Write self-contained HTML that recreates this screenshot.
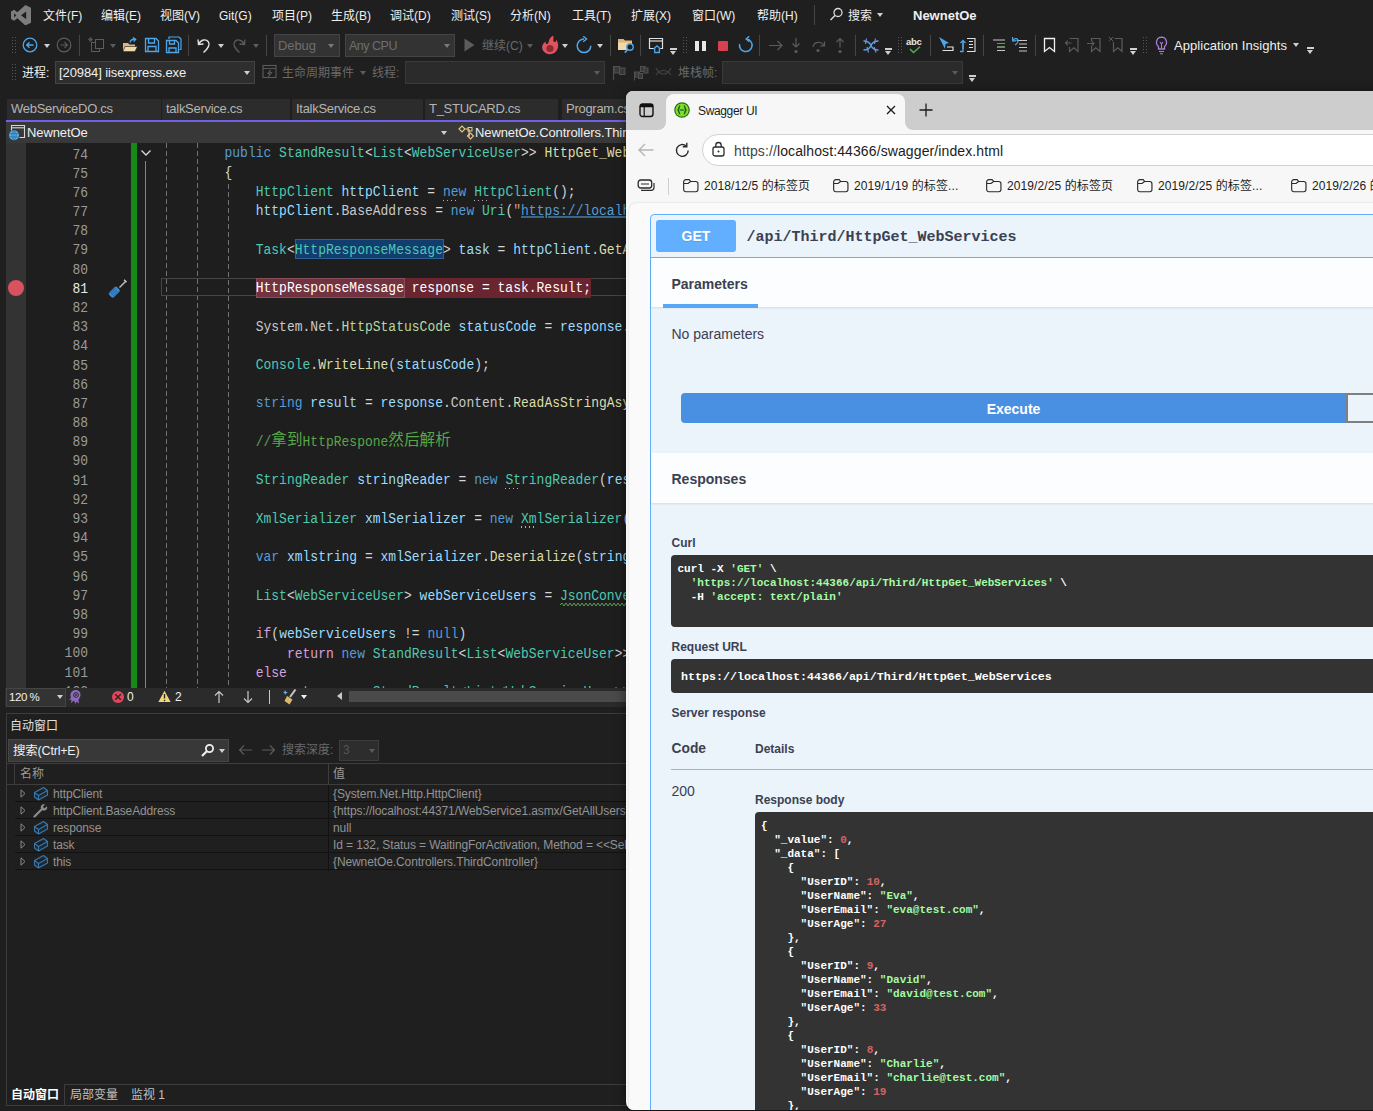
<!DOCTYPE html><html lang="zh-CN"><head><meta charset="utf-8"><title>NewnetOe</title><style>
*{box-sizing:border-box;margin:0;padding:0}
html,body{width:1373px;height:1111px;overflow:hidden;background:#1f1f1f}
body{position:relative;font-family:"Liberation Sans","Noto Sans CJK SC",sans-serif;font-size:12px;color:#e6e6e6}
.a{position:absolute;white-space:nowrap}
.ui{font-size:12px;line-height:16px;color:#f0f0f0}
.dim{color:#6a6a6a}
.combo{position:absolute;background:#333;border:1px solid #444}
.sep{position:absolute;width:1px;background:#454545}
.grip{position:absolute;width:5px;background-image:radial-gradient(circle,#5a5a5a 0.7px,transparent 0.9px);background-size:3px 3px}
.tab{position:absolute;top:99px;height:21px;background:#2c2c2c;color:#b4b4b4;font-size:13px;line-height:20px;padding-left:4px;white-space:nowrap;overflow:hidden;letter-spacing:-0.28px}
.code{font-family:"Liberation Mono","Noto Sans CJK SC",monospace;font-size:13px;line-height:19px;white-space:pre;color:#dcdcdc}
.code span{display:inline-block;transform:scaleY(1.12);transform-origin:0 55%}
.code span.cj{transform:none;color:#57a64a;position:relative;top:-1px;font-size:15.6px;font-family:"Liberation Mono","Noto Sans CJK SC",sans-serif;line-height:19px;vertical-align:top}
.ln{position:absolute;left:26px;width:56px;text-align:right;color:#9a9a9a}
.k{color:#569cd6}.t{color:#4ec9b0}.v{color:#9cdcfe}.m{color:#dcdcaa}.p{color:#d4d4d4}.s{color:#d69d85}.c{color:#57a64a}.f{color:#d8a0df}.u{color:#569cd6;text-decoration:underline}.n{color:#c8c8c8}.w{color:#fff}.e{color:#b8d7a3}
.sw{font-family:"Liberation Sans","Noto Sans CJK SC",sans-serif;color:#3b4151}
.mono{font-family:"Liberation Mono",monospace;font-weight:bold;white-space:pre}
.g{color:#a2fca2}.r{color:#d36363}
</style></head><body>
<svg class="a" style="left:10.9px;top:4.8px" width="20.2" height="20.6" viewBox="0 0 20.2 20.6"><path d="M14.4 0 L20.1 2.9 V17.6 L14.4 20.5 L6.3 13.2 L3.2 15.8 L0 14 V6.5 L3.2 4.7 L6.3 7.3 Z M15.2 6.5 L10 10.3 L15.2 14.3 Z M3.1 8.2 V12.5 L5.3 10.3 Z" fill="#7d7d7d" fill-rule="evenodd"/></svg>
<div class="a ui" style="left:43px;top:8px">文件(F)</div>
<div class="a ui" style="left:101px;top:8px">编辑(E)</div>
<div class="a ui" style="left:160px;top:8px">视图(V)</div>
<div class="a ui" style="left:219px;top:8px">Git(G)</div>
<div class="a ui" style="left:272px;top:8px">项目(P)</div>
<div class="a ui" style="left:331px;top:8px">生成(B)</div>
<div class="a ui" style="left:390px;top:8px">调试(D)</div>
<div class="a ui" style="left:451px;top:8px">测试(S)</div>
<div class="a ui" style="left:510px;top:8px">分析(N)</div>
<div class="a ui" style="left:572px;top:8px">工具(T)</div>
<div class="a ui" style="left:631px;top:8px">扩展(X)</div>
<div class="a ui" style="left:692px;top:8px">窗口(W)</div>
<div class="a ui" style="left:757px;top:8px">帮助(H)</div>
<div class="sep" style="left:814px;top:5px;height:20px"></div>
<svg class="a" style="left:829px;top:7px" width="15" height="15" viewBox="0 0 15 15"><circle cx="9" cy="5.5" r="4" fill="none" stroke="#dcdcdc" stroke-width="1.3"/><path d="M6 8.5 L1.5 13" stroke="#dcdcdc" stroke-width="1.5"/></svg>
<div class="a ui" style="left:848px;top:8px">搜索</div>
<div class="a" style="left:877px;top:13px;border:3.5px solid transparent;border-top:4px solid #d0d0d0"></div>
<div class="a ui" style="left:913px;top:8px;font-weight:bold;font-size:13px;letter-spacing:0">NewnetOe</div>
<div class="grip" style="left:11px;top:36px;height:19px"></div>
<svg class="a" style="left:22px;top:37px" width="16" height="16" viewBox="0 0 16 16"><circle cx="8" cy="8" r="6.8" fill="none" stroke="#4ea6ea" stroke-width="1.3"/><path d="M11.5 8 H5 M7.5 5.2 L4.7 8 L7.5 10.8" fill="none" stroke="#4ea6ea" stroke-width="1.3"/></svg>
<div class="a" style="left:44.3px;top:44.3px;border:3.5px solid transparent;border-top:4px solid #d0d0d0;border-bottom:0"></div>
<svg class="a" style="left:56px;top:37px" width="16" height="16" viewBox="0 0 16 16"><circle cx="8" cy="8" r="6.8" fill="none" stroke="#5c5c5c" stroke-width="1.2"/><path d="M4.5 8 H11 M8.5 5.2 L11.3 8 L8.5 10.8" fill="none" stroke="#5c5c5c" stroke-width="1.2"/></svg>
<div class="sep" style="left:79px;top:35px;height:21px"></div>
<svg class="a" style="left:88px;top:37px" width="17" height="17" viewBox="0 0 17 17"><rect x="3.5" y="5.5" width="8" height="9" fill="none" stroke="#5c5c5c"/><rect x="7.5" y="2.5" width="8" height="9" fill="#1f1f1f" stroke="#5c5c5c"/><path d="M2.5 0 V5 M0 2.5 H5 M0.8 0.8 L4.2 4.2 M4.2 0.8 L0.8 4.2" stroke="#5c5c5c" stroke-width="0.8"/></svg>
<div class="a" style="left:110.3px;top:44.3px;border:3.5px solid transparent;border-top:4px solid #5c5c5c;border-bottom:0"></div>
<svg class="a" style="left:122px;top:37px" width="17" height="17" viewBox="0 0 17 17"><path d="M1 6 H6 L7.5 7.5 H13 V14.5 H1 Z" fill="#dcb67a"/><path d="M3 9.5 H15.5 L13 14.5 H1 Z" fill="#f0d9a8" stroke="#1f1f1f" stroke-width="0.6"/><path d="M8 5.5 C8.5 3 10.5 2 13 2.3 M11 0.5 L13.6 2.3 L11.6 4.6" fill="none" stroke="#4ea6ea" stroke-width="1.4"/></svg>
<svg class="a" style="left:144px;top:37px" width="16" height="16" viewBox="0 0 16 16"><path d="M1.5 1.5 H12 L14.5 4 V14.5 H1.5 Z" fill="none" stroke="#4ea6ea" stroke-width="1.3"/><path d="M4.5 1.5 V6 H10.5 V1.5 M4 14.5 V9.5 H12 V14.5" fill="none" stroke="#4ea6ea" stroke-width="1.3"/></svg>
<svg class="a" style="left:165px;top:36px" width="17" height="18" viewBox="0 0 17 18"><path d="M4 3 V1 H14 L16 3 V13.5 H14.5" fill="none" stroke="#4ea6ea" stroke-width="1.2"/><path d="M1.5 4.5 H11 L13.5 7 V16.5 H1.5 Z" fill="none" stroke="#4ea6ea" stroke-width="1.3"/><path d="M4.5 4.5 V8 H9.5 V4.5 M4 16.5 V12 H11 V16.5" fill="none" stroke="#4ea6ea" stroke-width="1.3"/></svg>
<div class="sep" style="left:188px;top:35px;height:21px"></div>
<svg class="a" style="left:196px;top:37px" width="16" height="17" viewBox="0 0 16 17"><path d="M2 2.5 L2.5 7.5 L7.5 7 M2.7 7.2 C5 2.5 10 1.5 12.5 5 C14.5 8.5 11.5 12 7.5 15.5" fill="none" stroke="#e0e0e0" stroke-width="1.4"/></svg>
<div class="a" style="left:218.3px;top:44.3px;border:3.5px solid transparent;border-top:4px solid #d0d0d0;border-bottom:0"></div>
<svg class="a" style="left:231px;top:37px" width="16" height="17" viewBox="0 0 16 17"><path d="M14 2.5 L13.5 7.5 L8.5 7 M13.3 7.2 C11 2.5 6 1.5 3.5 5 C1.5 8.5 4.5 12 8.5 15.5" fill="none" stroke="#5c5c5c" stroke-width="1.3"/></svg>
<div class="a" style="left:253.3px;top:44.3px;border:3.5px solid transparent;border-top:4px solid #5c5c5c;border-bottom:0"></div>
<div class="sep" style="left:266px;top:35px;height:21px"></div>
<div class="combo" style="left:274px;top:34px;width:66px;height:23px"></div>
<div class="a ui" style="left:278px;top:38px;color:#6e6e6e;font-size:13px;letter-spacing:-0.1px">Debug</div>
<div class="a" style="left:328.3px;top:44.3px;border:3.5px solid transparent;border-top:4px solid #7a7a7a;border-bottom:0"></div>
<div class="combo" style="left:345px;top:34px;width:110px;height:23px"></div>
<div class="a ui" style="left:349px;top:38px;color:#6e6e6e;font-size:12.5px;letter-spacing:-0.5px">Any CPU</div>
<div class="a" style="left:444.3px;top:44.3px;border:3.5px solid transparent;border-top:4px solid #7a7a7a;border-bottom:0"></div>
<svg class="a" style="left:464px;top:38px" width="12" height="14" viewBox="0 0 12 14"><path d="M0.5 0.5 L10.5 7 L0.5 13.5 Z" fill="#5c5c5c"/></svg>
<div class="a ui" style="left:482px;top:38px;color:#6a6a6a">继续(C)</div>
<div class="a" style="left:527.3px;top:44.3px;border:3.5px solid transparent;border-top:4px solid #5c5c5c;border-bottom:0"></div>
<svg class="a" style="left:541px;top:35px" width="18" height="20" viewBox="0 0 18 20"><path d="M12 0.5 C13.5 4 11 5.5 13.5 7 C14.5 7.5 15.5 6 15 4.5 C18 8 18 14 14 17.5 C10 20.5 3.5 19.5 1.5 14.5 C0 10.5 3 8 4.5 6.5 C4.5 8.5 5.5 9.5 6.5 9 C8.5 7.5 7 3.5 12 0.5 Z" fill="#e0525d"/><circle cx="9" cy="13.5" r="3.6" fill="#8a2c34"/></svg>
<div class="a" style="left:562.3px;top:44.3px;border:3.5px solid transparent;border-top:4px solid #d0d0d0;border-bottom:0"></div>
<svg class="a" style="left:575px;top:36px" width="18" height="18" viewBox="0 0 18 18"><path d="M9 3 A6.8 6.8 0 1 0 15.8 9.8" fill="none" stroke="#4ea6ea" stroke-width="1.5"/><path d="M8.2 0.2 L11.6 3 L8.2 5.8" fill="none" stroke="#4ea6ea" stroke-width="1.4"/></svg>
<div class="a" style="left:597.3px;top:44.3px;border:3.5px solid transparent;border-top:4px solid #d0d0d0;border-bottom:0"></div>
<div class="sep" style="left:610px;top:35px;height:21px"></div>
<svg class="a" style="left:617px;top:36px" width="19" height="19" viewBox="0 0 19 19"><path d="M1 3 H6.5 L8 4.5 H15 V14 H1 Z" fill="#dcb67a"/><path d="M1 6.5 H15 V14 H1 Z" fill="#f0d9a8"/><circle cx="13" cy="11" r="3.2" fill="#1f1f1f" stroke="#4ea6ea" stroke-width="1.4"/><path d="M10.8 13.4 L7.8 16.6" stroke="#4ea6ea" stroke-width="1.6"/></svg>
<div class="sep" style="left:640px;top:35px;height:21px"></div>
<svg class="a" style="left:648px;top:37px" width="18" height="18" viewBox="0 0 18 18"><path d="M6 11.5 H1.5 V1.5 H14.5 V11.5 H12" fill="none" stroke="#e0e0e0" stroke-width="1.2"/><path d="M1.5 4 H14.5" stroke="#e0e0e0" stroke-width="1.2"/><path d="M5.5 12 L9 8.8 L12.5 12 M6.7 11.5 V15.5 H11.3 V11.5" fill="none" stroke="#4ea6ea" stroke-width="1.3"/></svg>
<div class="a" style="left:669.5px;top:48px;width:7px;height:1.5px;background:#d0d0d0"></div>
<div class="a" style="left:670.3px;top:51.3px;border:3.5px solid transparent;border-top:4px solid #d0d0d0;border-bottom:0"></div>
<div class="grip" style="left:682px;top:36px;height:19px"></div>
<div class="a" style="left:695px;top:40.5px;width:4px;height:10.5px;background:#e8e8e8"></div><div class="a" style="left:701.8px;top:40.5px;width:4px;height:10.5px;background:#e8e8e8"></div>
<div class="a" style="left:717.5px;top:40.5px;width:10.5px;height:10.5px;background:#d6404f;border-radius:1px"></div>
<svg class="a" style="left:737px;top:36px" width="17" height="18" viewBox="0 0 17 18"><path d="M9.5 3 A6.3 6.3 0 1 1 2.6 8" fill="none" stroke="#4ea6ea" stroke-width="1.5"/><path d="M10.8 0.2 L7.6 3 L10.8 5.8" fill="none" stroke="#4ea6ea" stroke-width="1.4" transform="translate(1.5,0)"/></svg>
<div class="sep" style="left:759px;top:35px;height:21px"></div>
<svg class="a" style="left:768px;top:39px" width="16" height="13" viewBox="0 0 16 13"><path d="M1 6.5 H14 M9.5 2 L14 6.5 L9.5 11" fill="none" stroke="#5c5c5c" stroke-width="1.2"/></svg>
<svg class="a" style="left:790px;top:37px" width="12" height="18" viewBox="0 0 12 18"><path d="M6 1 V10 M2.5 6.5 L6 10 L9.5 6.5" fill="none" stroke="#5c5c5c" stroke-width="1.2"/><circle cx="6" cy="14.5" r="1.6" fill="#5c5c5c"/></svg>
<svg class="a" style="left:811px;top:38px" width="16" height="16" viewBox="0 0 16 16"><path d="M2 9 C3 3.5 10 2.5 13 7.5 M13.5 3.5 V8 H9" fill="none" stroke="#5c5c5c" stroke-width="1.2"/><circle cx="7" cy="12.5" r="1.6" fill="#5c5c5c"/></svg>
<svg class="a" style="left:834px;top:37px" width="12" height="18" viewBox="0 0 12 18"><path d="M6 10.5 V1.5 M2.5 5 L6 1.5 L9.5 5" fill="none" stroke="#5c5c5c" stroke-width="1.2"/><circle cx="6" cy="14.5" r="1.6" fill="#5c5c5c"/></svg>
<div class="sep" style="left:855px;top:35px;height:21px"></div>
<svg class="a" style="left:862px;top:37px" width="18" height="17" viewBox="0 0 18 17"><path d="M1.5 4 C6 4 8 6 9 8.5 C10 11 12 13 16.5 13 M1.5 13 C6 13 8 11 9 8.5 C10 6 12 4 16.5 4" fill="none" stroke="#4ea6ea" stroke-width="1.4"/><path d="M4.5 1.5 L3.5 7 M5 10 L6.5 15.5 M13.5 1.5 L12.5 7 M12 10 L14 15.5" stroke="#9a7fd6" stroke-width="1.2"/></svg>
<div class="a" style="left:884.5px;top:48px;width:7px;height:1.5px;background:#d0d0d0"></div>
<div class="a" style="left:885.3px;top:51.3px;border:3.5px solid transparent;border-top:4px solid #d0d0d0;border-bottom:0"></div>
<div class="grip" style="left:897px;top:36px;height:19px"></div>
<div class="a" style="left:906px;top:36px;font-size:9.5px;line-height:11px;color:#e6e6e6;font-weight:bold;letter-spacing:-0.3px">abc</div>
<svg class="a" style="left:909px;top:46px" width="12" height="8" viewBox="0 0 12 8"><path d="M1 3 L4.5 6.5 L11 0.8" fill="none" stroke="#4caf50" stroke-width="1.5"/></svg>
<div class="sep" style="left:930px;top:35px;height:21px"></div>
<svg class="a" style="left:937px;top:36px" width="18" height="18" viewBox="0 0 18 18"><path d="M2 1 L8 13 L8.5 8 L12 7 Z" fill="#4ea6ea"/><path d="M5.5 14.5 H16 V11 H10" fill="none" stroke="#e0e0e0" stroke-width="1.2"/></svg>
<svg class="a" style="left:959px;top:36px" width="18" height="18" viewBox="0 0 18 18"><path d="M4 7 V15.5 H1 M1 15.5" fill="none" stroke="#4ea6ea" stroke-width="1.3"/><path d="M4 13 V5 M1.5 7 L4 4.5 L6.5 7" fill="none" stroke="#4ea6ea" stroke-width="1.3"/><path d="M8 2.5 H16 V15.5 H8 M10 5.5 H14 M10 8.5 H14 M10 11.5 H14" fill="none" stroke="#e0e0e0" stroke-width="1.1"/></svg>
<div class="sep" style="left:983px;top:35px;height:21px"></div>
<svg class="a" style="left:992px;top:39px" width="14" height="13" viewBox="0 0 14 13"><path d="M1 1 H13 M5 4.5 H13 M5 8 H13 M5 11.5 H13" stroke="#c8c8c8" stroke-width="1.1"/><path d="M5 4.5 H13 M5 8 H13" stroke="#57a64a" stroke-width="1.1"/></svg>
<svg class="a" style="left:1011px;top:36px" width="17" height="17" viewBox="0 0 17 17"><path d="M6 4.5 H16 M8 8 H16 M8 11.5 H16 M8 15 H16" stroke="#c8c8c8" stroke-width="1.1"/><path d="M1.5 1 L1.8 5 L5.5 4.6 M2 4.8 C3 1.5 7.5 2 7 5.5 C6.7 7 5.5 8 4 9" fill="none" stroke="#4ea6ea" stroke-width="1.2"/></svg>
<div class="sep" style="left:1035px;top:35px;height:21px"></div>
<svg class="a" style="left:1043px;top:37px" width="14" height="17" viewBox="0 0 14 17"><path d="M1.5 1.5 H11.5 V14.5 L6.5 10.5 L1.5 14.5 Z" fill="none" stroke="#f0f0f0" stroke-width="1.3"/></svg>
<svg class="a" style="left:1064px;top:37px" width="16" height="17" viewBox="0 0 16 17"><path d="M5.5 1.5 H14 V14.5 L9.8 10.8 L5.5 14.5 V10" fill="none" stroke="#5c5c5c" stroke-width="1.2"/><path d="M7.5 6 H1.5 M3.8 3.6 L1.5 6 L3.8 8.4" fill="none" stroke="#5c5c5c" stroke-width="1.1"/></svg>
<svg class="a" style="left:1086px;top:37px" width="16" height="17" viewBox="0 0 16 17"><path d="M5.5 4 V1.5 H14 V14.5 L9.8 10.8 L5.5 14.5 V9" fill="none" stroke="#5c5c5c" stroke-width="1.2"/><path d="M1 6.5 H8 M5.8 4.1 L8 6.5 L5.8 8.9" fill="none" stroke="#5c5c5c" stroke-width="1.1"/></svg>
<svg class="a" style="left:1108px;top:36px" width="16" height="18" viewBox="0 0 16 18"><path d="M6.5 2.5 H14 V15.5 L9.8 11.8 L5.5 15.5 V6" fill="none" stroke="#5c5c5c" stroke-width="1.2"/><path d="M0.8 0.8 L5.2 5.2 M5.2 0.8 L0.8 5.2" stroke="#5c5c5c" stroke-width="1"/></svg>
<div class="a" style="left:1129.5px;top:48px;width:7px;height:1.5px;background:#d0d0d0"></div>
<div class="a" style="left:1130.3px;top:51.3px;border:3.5px solid transparent;border-top:4px solid #d0d0d0;border-bottom:0"></div>
<div class="grip" style="left:1142px;top:36px;height:19px"></div>
<svg class="a" style="left:1154px;top:36px" width="15" height="19" viewBox="0 0 15 19"><path d="M7.5 1.2 A5.2 5.2 0 0 1 10.5 10.5 V13 H4.5 V10.5 A5.2 5.2 0 0 1 7.5 1.2 Z" fill="none" stroke="#a87fd9" stroke-width="1.3"/><path d="M5 15.5 H10 M6 17.8 H9 M6 6 L7.5 8 L9 6 M7.5 8 V12.5" fill="none" stroke="#a87fd9" stroke-width="1.1"/></svg>
<div class="a ui" style="left:1174px;top:38px;font-size:13px;letter-spacing:0.05px">Application Insights</div>
<div class="a" style="left:1293.3px;top:43.3px;border:3.5px solid transparent;border-top:4px solid #d0d0d0;border-bottom:0"></div>
<div class="a" style="left:1306.5px;top:47px;width:7px;height:1.5px;background:#d0d0d0"></div>
<div class="a" style="left:1307.3px;top:50.3px;border:3.5px solid transparent;border-top:4px solid #d0d0d0;border-bottom:0"></div>
<div class="grip" style="left:11px;top:63px;height:19px"></div>
<div class="a ui" style="left:22px;top:65px">进程:</div>
<div class="combo" style="left:55px;top:61px;width:200px;height:23px;background:#2e2e2e"></div>
<div class="a ui" style="left:59px;top:65px;font-size:13px;letter-spacing:-0.1px">[20984] iisexpress.exe</div>
<div class="a" style="left:244.3px;top:71.3px;border:3.5px solid transparent;border-top:4px solid #d0d0d0;border-bottom:0"></div>
<svg class="a" style="left:262px;top:64px" width="15" height="15" viewBox="0 0 15 15"><rect x="1" y="1.5" width="13" height="12" fill="none" stroke="#5c5c5c" stroke-width="1.1"/><path d="M1 4.5 H14 M8.5 6 L5.5 9.5 H8 L6.5 12.5 L10 8.5 H7.5 Z" fill="none" stroke="#5c5c5c" stroke-width="0.9"/></svg>
<div class="a ui" style="left:282px;top:65px;color:#6a6a6a">生命周期事件</div>
<div class="a" style="left:360.3px;top:71.3px;border:3.5px solid transparent;border-top:4px solid #5c5c5c;border-bottom:0"></div>
<div class="a ui" style="left:372px;top:65px;color:#6a6a6a">线程:</div>
<div class="combo" style="left:405px;top:61px;width:200px;height:23px;background:#2b2b2b;border-color:#3a3a3a"></div>
<div class="a" style="left:594.3px;top:71.3px;border:3.5px solid transparent;border-top:4px solid #5c5c5c;border-bottom:0"></div>
<svg class="a" style="left:612px;top:65px" width="15" height="16" viewBox="0 0 15 16"><path d="M1.5 1 V15" stroke="#505050" stroke-width="1.1"/><rect x="2" y="1.5" width="6" height="6.5" fill="#383838" stroke="#505050"/><rect x="7.5" y="3" width="5.5" height="6.5" fill="#383838" stroke="#505050"/></svg>
<svg class="a" style="left:633px;top:65px" width="17" height="17" viewBox="0 0 17 17"><path d="M1.5 6.5 V15.5" stroke="#505050" stroke-width="1.1"/><rect x="2" y="7" width="4.5" height="5" fill="#383838" stroke="#505050"/><rect x="5.5" y="8.5" width="4" height="5" fill="#383838" stroke="#505050"/><rect x="7.5" y="1.5" width="4.5" height="5" fill="#383838" stroke="#505050"/><rect x="11" y="3" width="4" height="5" fill="#383838" stroke="#505050"/></svg>
<svg class="a" style="left:655px;top:65px" width="17" height="13" viewBox="0 0 17 13"><path d="M1 3 C5 11 12 11 16 3 M1 10 C5 4 12 4 16 10" fill="none" stroke="#444" stroke-width="1.1"/></svg>
<div class="a ui" style="left:678px;top:65px;color:#6a6a6a">堆栈帧:</div>
<div class="combo" style="left:722px;top:61px;width:241px;height:23px;background:#2b2b2b;border-color:#3a3a3a"></div>
<div class="a" style="left:952.3px;top:71.3px;border:3.5px solid transparent;border-top:4px solid #5c5c5c;border-bottom:0"></div>
<div class="a" style="left:968.5px;top:75px;width:7px;height:1.5px;background:#d0d0d0"></div>
<div class="a" style="left:969.3px;top:78.3px;border:3.5px solid transparent;border-top:4px solid #d0d0d0;border-bottom:0"></div>
<div class="tab" style="left:7px;width:154px">WebServiceDO.cs</div>
<div class="tab" style="left:162px;width:128px">talkService.cs</div>
<div class="tab" style="left:292px;width:131px">ItalkService.cs</div>
<div class="tab" style="left:425px;width:133px">T_STUCARD.cs</div>
<div class="tab" style="left:562px;width:80px">Program.cs</div>
<div class="a" style="left:6px;top:120px;width:640px;height:2px;background:#7160e8"></div>
<div class="a" style="left:6px;top:122px;width:640px;height:21px;background:#383838"></div>
<svg class="a" style="left:9px;top:124px" width="18" height="18" viewBox="0 0 18 18"><path d="M2.5 6.5 V1.5 H15.5 V13.5 H10.5" fill="none" stroke="#d8d8d8" stroke-width="1.1"/><path d="M2.5 3.8 H15.5" stroke="#d8d8d8" stroke-width="1.1"/><circle cx="5" cy="11.2" r="5" fill="#55aef0"/><path d="M0.5 9.6 H9.5 M0.5 12.8 H9.5 M5 6.2 V16.2 M5 6.2 C2 9 2 13.5 5 16.2 M5 6.2 C8 9 8 13.5 5 16.2" fill="none" stroke="#2c6a9c" stroke-width="0.7"/></svg>
<div class="a ui" style="left:27px;top:125px;font-size:13px;letter-spacing:-0.1px">NewnetOe</div>
<div class="a" style="left:441.3px;top:131.3px;border:3.5px solid transparent;border-top:4px solid #d0d0d0;border-bottom:0"></div>
<svg class="a" style="left:457px;top:124px" width="18" height="18" viewBox="0 0 18 18"><path d="M2 5 L5 2 L8 5 L5 8 Z M8 5 H12 M12 5 V12 H13 M12 7.5 H13" fill="none" stroke="#e8c88a" stroke-width="1.1"/><rect x="11" y="3.5" width="4" height="3.5" fill="none" stroke="#e8c88a" stroke-width="1"/><path d="M10.5 12 L13.5 9 L16.5 12 L13.5 15 Z" fill="none" stroke="#e8c88a" stroke-width="1.1"/></svg>
<div class="a ui" style="left:475px;top:125px;font-size:13px;letter-spacing:-0.1px">NewnetOe.Controllers.ThirdController</div>
<div class="a" style="left:6px;top:143px;width:640px;height:544.6px;background:#1e1e1e;overflow:hidden" id="ed">
<div class="a" style="left:0;top:0;width:20px;height:545px;background:#333"></div>
<div class="a" style="left:125px;top:0;width:6px;height:545px;background:#168a16"></div>
<div class="a" style="left:139px;top:18px;width:1px;height:530px;background:#858585"></div>
<div class="a" style="left:160px;top:0px;width:1px;height:545px;background:repeating-linear-gradient(to bottom,#727272 0,#727272 5.5px,transparent 5.5px,transparent 8px)"></div>
<div class="a" style="left:191px;top:0px;width:1px;height:545px;background:repeating-linear-gradient(to bottom,#727272 0,#727272 5.5px,transparent 5.5px,transparent 8px)"></div>
<div class="a" style="left:222px;top:41px;width:1px;height:510px;background:repeating-linear-gradient(to bottom,#727272 0,#727272 5.5px,transparent 5.5px,transparent 8px)"></div>
<div class="a" style="left:289px;top:96px;width:149px;height:19.5px;background:#113d6f;border:1px solid #2f5f93"></div>
<div class="a" style="left:155.3px;top:135.3px;width:500px;height:17.4px;border:1.7px solid #464646"></div>
<div class="a" style="left:249.5px;top:135px;width:335px;height:19.6px;background:#6b2530"></div>
<div class="a" style="left:249.5px;top:135px;width:149px;height:19.6px;background:#73323f;border:1px solid #87505a"></div>
<div class="a code ln" style="top:2.5px;color:#9a9a9a"><span>74</span></div>
<div class="a code" style="left:218.5px;top:1.3px"><span class="k">public </span><span class="t">StandResult</span><span class="p">&lt;</span><span class="t">List</span><span class="p">&lt;</span><span class="t">WebServiceUser</span><span class="p">&gt;&gt; </span><span class="m">HttpGet_WebServices</span><span class="p">()</span></div>
<div class="a code ln" style="top:21.69px;color:#9a9a9a"><span>75</span></div>
<div class="a code" style="left:218.5px;top:20.54px"><span class="p">{</span></div>
<div class="a code ln" style="top:40.87px;color:#9a9a9a"><span>76</span></div>
<div class="a code" style="left:218.5px;top:39.79px"><span class="p">    </span><span class="t">HttpClient </span><span class="v">httpClient</span><span class="p"> = </span><span class="k">new </span><span class="t">HttpClient</span><span class="p">();</span></div>
<div class="a code ln" style="top:60.06px;color:#9a9a9a"><span>77</span></div>
<div class="a code" style="left:218.5px;top:59.03px"><span class="p">    </span><span class="v">httpClient</span><span class="p">.</span><span class="n">BaseAddress</span><span class="p"> = </span><span class="k">new </span><span class="t">Uri</span><span class="p">(</span><span class="s">"</span><span class="u">https://localhost:44371/WebService1.asmx/GetAllUsers</span><span class="s">"</span><span class="p">);</span></div>
<div class="a code ln" style="top:79.24px;color:#9a9a9a"><span>78</span></div>
<div class="a code ln" style="top:98.43px;color:#9a9a9a"><span>79</span></div>
<div class="a code" style="left:218.5px;top:97.52px"><span class="p">    </span><span class="t">Task</span><span class="p">&lt;</span><span class="t">HttpResponseMessage</span><span class="p">&gt; </span><span class="v">task</span><span class="p"> = </span><span class="v">httpClient</span><span class="p">.</span><span class="m">GetAsync</span><span class="p">("");</span></div>
<div class="a code ln" style="top:117.61px;color:#9a9a9a"><span>80</span></div>
<div class="a code ln" style="top:136.79px;color:#e8e8e8"><span>81</span></div>
<div class="a code" style="left:218.5px;top:136.01px"><span class="p">    </span><span class="w">HttpResponseMessage response = task.Result;</span></div>
<div class="a code ln" style="top:155.98px;color:#9a9a9a"><span>82</span></div>
<div class="a code ln" style="top:175.16px;color:#9a9a9a"><span>83</span></div>
<div class="a code" style="left:218.5px;top:174.5px"><span class="p">    </span><span class="n">System</span><span class="p">.</span><span class="n">Net</span><span class="p">.</span><span class="e">HttpStatusCode </span><span class="v">statusCode</span><span class="p"> = </span><span class="v">response</span><span class="p">.</span><span class="n">StatusCode</span><span class="p">;</span></div>
<div class="a code ln" style="top:194.35px;color:#9a9a9a"><span>84</span></div>
<div class="a code ln" style="top:213.53px;color:#9a9a9a"><span>85</span></div>
<div class="a code" style="left:218.5px;top:212.98px"><span class="p">    </span><span class="t">Console</span><span class="p">.</span><span class="m">WriteLine</span><span class="p">(</span><span class="v">statusCode</span><span class="p">);</span></div>
<div class="a code ln" style="top:232.72px;color:#9a9a9a"><span>86</span></div>
<div class="a code ln" style="top:251.9px;color:#9a9a9a"><span>87</span></div>
<div class="a code" style="left:218.5px;top:251.47px"><span class="p">    </span><span class="k">string </span><span class="v">result</span><span class="p"> = </span><span class="v">response</span><span class="p">.</span><span class="n">Content</span><span class="p">.</span><span class="m">ReadAsStringAsync</span><span class="p">().</span><span class="n">Result</span><span class="p">;</span></div>
<div class="a code ln" style="top:271.09px;color:#9a9a9a"><span>88</span></div>
<div class="a code ln" style="top:290.27px;color:#9a9a9a"><span>89</span></div>
<div class="a code" style="left:218.5px;top:289.96px"><span class="p">    </span><span class="c">//</span><span class="cj">拿到</span><span class="c">HttpRespone</span><span class="cj">然后解析</span></div>
<div class="a code ln" style="top:309.46px;color:#9a9a9a"><span>90</span></div>
<div class="a code ln" style="top:328.64px;color:#9a9a9a"><span>91</span></div>
<div class="a code" style="left:218.5px;top:328.45px"><span class="p">    </span><span class="t">StringReader </span><span class="v">stringReader</span><span class="p"> = </span><span class="k">new </span><span class="t">StringReader</span><span class="p">(</span><span class="v">result</span><span class="p">);</span></div>
<div class="a code ln" style="top:347.83px;color:#9a9a9a"><span>92</span></div>
<div class="a code ln" style="top:367.01px;color:#9a9a9a"><span>93</span></div>
<div class="a code" style="left:218.5px;top:366.94px"><span class="p">    </span><span class="t">XmlSerializer </span><span class="v">xmlSerializer</span><span class="p"> = </span><span class="k">new </span><span class="t">XmlSerializer</span><span class="p">(</span><span class="k">typeof</span><span class="p">(</span><span class="t">ArrayOfWebServiceUser</span><span class="p">));</span></div>
<div class="a code ln" style="top:386.2px;color:#9a9a9a"><span>94</span></div>
<div class="a code ln" style="top:405.38px;color:#9a9a9a"><span>95</span></div>
<div class="a code" style="left:218.5px;top:405.42px"><span class="p">    </span><span class="k">var </span><span class="v">xmlstring</span><span class="p"> = </span><span class="v">xmlSerializer</span><span class="p">.</span><span class="m">Deserialize</span><span class="p">(</span><span class="v">stringReader</span><span class="p">);</span></div>
<div class="a code ln" style="top:424.57px;color:#9a9a9a"><span>96</span></div>
<div class="a code ln" style="top:443.75px;color:#9a9a9a"><span>97</span></div>
<div class="a code" style="left:218.5px;top:443.91px"><span class="p">    </span><span class="t">List</span><span class="p">&lt;</span><span class="t">WebServiceUser</span><span class="p">&gt; </span><span class="v">webServiceUsers</span><span class="p"> = </span><span class="t">JsonConvert</span><span class="p">.</span><span class="m">DeserializeObject</span><span class="p">&lt;</span></div>
<div class="a code ln" style="top:462.94px;color:#9a9a9a"><span>98</span></div>
<div class="a code ln" style="top:482.12px;color:#9a9a9a"><span>99</span></div>
<div class="a code" style="left:218.5px;top:482.4px"><span class="p">    </span><span class="f">if</span><span class="p">(</span><span class="v">webServiceUsers</span><span class="p"> != </span><span class="k">null</span><span class="p">)</span></div>
<div class="a code ln" style="top:501.31px;color:#9a9a9a"><span>100</span></div>
<div class="a code" style="left:218.5px;top:501.64px"><span class="p">        </span><span class="f">return </span><span class="k">new </span><span class="t">StandResult</span><span class="p">&lt;</span><span class="t">List</span><span class="p">&lt;</span><span class="t">WebServiceUser</span><span class="p">&gt;&gt;(</span><span class="v">webServiceUsers</span><span class="p">);</span></div>
<div class="a code ln" style="top:520.5px;color:#9a9a9a"><span>101</span></div>
<div class="a code" style="left:218.5px;top:520.89px"><span class="p">    </span><span class="f">else</span></div>
<div class="a code ln" style="top:539.68px;color:#9a9a9a"><span>102</span></div>
<div class="a code" style="left:218.5px;top:540.13px"><span class="p">        </span><span class="f">return </span><span class="k">new </span><span class="t">StandResult</span><span class="p">&lt;</span><span class="t">List</span><span class="p">&lt;</span><span class="t">WebServiceUser</span><span class="p">&gt;&gt;();</span></div>
<div class="a" style="left:437px;top:56.87px;width:14px;height:1.5px;background:repeating-linear-gradient(to right,#b0b0b0 0,#b0b0b0 1.5px,transparent 1.5px,transparent 4px)"></div>
<div class="a" style="left:468px;top:56.87px;width:14px;height:1.5px;background:repeating-linear-gradient(to right,#b0b0b0 0,#b0b0b0 1.5px,transparent 1.5px,transparent 4px)"></div>
<div class="a" style="left:499px;top:344.64px;width:14px;height:1.5px;background:repeating-linear-gradient(to right,#b0b0b0 0,#b0b0b0 1.5px,transparent 1.5px,transparent 4px)"></div>
<div class="a" style="left:515px;top:383.01px;width:14px;height:1.5px;background:repeating-linear-gradient(to right,#b0b0b0 0,#b0b0b0 1.5px,transparent 1.5px,transparent 4px)"></div>
<svg class="a" style="left:554px;top:458.75px" width="90" height="5"><path d="M0 3 L2 1 L4 4 L6 1 L8 4 L10 1 L12 4 L14 1 L16 4 L18 1 L20 4 L22 1 L24 4 L26 1 L28 4 L30 1 L32 4 L34 1 L36 4 L38 1 L40 4 L42 1 L44 4 L46 1 L48 4 L50 1 L52 4 L54 1 L56 4 L58 1 L60 4 L62 1 L64 4 L66 1 L68 4 L70 1 L72 4 L74 1 L76 4 L78 1 L80 4 L82 1 L84 4 L86 1 L88 4 L90 1" fill="none" stroke="#57a64a" stroke-width="1"/></svg>
<svg class="a" style="left:134px;top:5.1px" width="12" height="10"><rect width="12" height="10" fill="#1e1e1e"/><path d="M1.5 2.5 L6 7 L10.5 2.5" fill="none" stroke="#dcdcdc" stroke-width="1.3"/></svg>
<div class="a" style="left:2px;top:136.5px;width:16px;height:16px;border-radius:50%;background:#d9525f"></div>
<svg class="a" style="left:101px;top:134.5px" width="21" height="21" viewBox="0 0 21 21"><path d="M12 9 L18.5 2.5 L19.5 3.5 L13 10 Z" fill="#bdbdbd"/><path d="M17.5 1.2 L20 3.8 L19 4.6 L16.6 2.2 Z" fill="#d0d0d0"/><g transform="rotate(45 7.5 14)"><rect x="4" y="8.5" width="7" height="11.5" rx="2" fill="#3b8ad1" stroke="#1e1e1e" stroke-width="0.5"/><path d="M5.5 11 V18 M7.5 11 V18 M9.5 11 V18" stroke="#1e4f7e" stroke-width="0.7"/></g></svg>
</div>
<div class="a" style="left:5px;top:688px;width:640px;height:18.5px;background:#2b2b2b"></div>
<div class="a" style="left:6px;top:688px;width:60px;height:18.5px;background:#333;border:1px solid #454545"></div>
<div class="a ui" style="left:9px;top:689px;font-size:11.5px;letter-spacing:-0.45px">120 %</div>
<div class="a" style="left:56.8px;top:695.3px;border:3.5px solid transparent;border-top:4px solid #d0d0d0;border-bottom:0"></div>
<svg class="a" style="left:68px;top:688px" width="14" height="18" viewBox="0 0 14 18"><path d="M7.5 2 C11 2 13 4.5 12.5 7.5 C12.2 9.5 11 10.5 10.5 11.5 L11 15.5 L8.5 13.5 L7.5 16 L6 12.5 L3 15 L3.5 11.5 L1 12 L3 9.5 C1.5 6 3.5 2 7.5 2 Z" fill="#8e6bc0"/><circle cx="8" cy="7" r="2.4" fill="none" stroke="#2b2b2b" stroke-width="1"/><circle cx="8" cy="7" r="0.9" fill="#2b2b2b"/></svg>
<div class="a" style="left:111.5px;top:691px;width:12px;height:12px;border-radius:50%;background:#e5445a"></div>
<svg class="a" style="left:113.5px;top:693px" width="8" height="8" viewBox="0 0 8 8"><path d="M1.2 1.2 L6.8 6.8 M6.8 1.2 L1.2 6.8" stroke="#2b2b2b" stroke-width="1.6"/></svg>
<div class="a ui" style="left:127px;top:689px">0</div>
<svg class="a" style="left:158px;top:690px" width="13" height="13" viewBox="0 0 13 13"><path d="M6.5 0.8 L12.6 12 H0.4 Z" fill="#f5d67a"/><path d="M6.5 4 V8.5 M6.5 9.7 V11.2" stroke="#2b2b2b" stroke-width="1.4"/></svg>
<div class="a ui" style="left:175px;top:689px">2</div>
<svg class="a" style="left:213px;top:690px" width="12" height="14" viewBox="0 0 12 14"><path d="M6 13 V1.5 M2 5.5 L6 1.5 L10 5.5" fill="none" stroke="#c8c8c8" stroke-width="1.2"/></svg>
<svg class="a" style="left:242px;top:690px" width="12" height="14" viewBox="0 0 12 14"><path d="M6 1 V12.5 M2 8.5 L6 12.5 L10 8.5" fill="none" stroke="#c8c8c8" stroke-width="1.2"/></svg>
<div class="a" style="left:269px;top:690px;width:1px;height:14px;background:#c8c8c8"></div>
<svg class="a" style="left:283px;top:688px" width="16" height="18" viewBox="0 0 16 18"><path d="M12.5 1.5 L7 9" stroke="#c8c8c8" stroke-width="2"/><path d="M4 8 L9.5 11.5 L6.5 16.5 L1.5 13 Z" fill="#d9b86c"/><path d="M2 2 L3 4 L5 4.5 L3 5.2 L2.2 7 L1.6 5 L0 4.4 L1.5 3.8 Z" fill="#6cb6f5"/></svg>
<div class="a" style="left:301.3px;top:695.3px;border:3.5px solid transparent;border-top:4px solid #f0f0f0;border-bottom:0"></div>
<div class="a" style="left:337px;top:692px;border:4px solid transparent;border-right:5px solid #c8c8c8;border-left:0"></div>
<div class="a" style="left:349px;top:691px;width:300px;height:11px;background:#4a4a4a"></div>
<div class="a" style="left:6px;top:713px;width:640px;height:393px;border:1px solid #3d3d3d;border-right:0;background:#1f1f1f"></div>
<div class="a ui" style="left:10px;top:718px;color:#e0e0e0">自动窗口</div>
<div class="a" style="left:8px;top:739px;width:221px;height:23px;background:#383838;border:1px solid #464646"></div>
<div class="a ui" style="left:13px;top:743px;font-size:12.5px;letter-spacing:-0.2px">搜索(Ctrl+E)</div>
<svg class="a" style="left:200px;top:743px" width="15" height="15" viewBox="0 0 15 15"><circle cx="9.5" cy="5.5" r="3.6" fill="none" stroke="#f0f0f0" stroke-width="1.8"/><path d="M7 8 L2 13" stroke="#f0f0f0" stroke-width="2.2"/></svg>
<div class="a" style="left:218.8px;top:749.3px;border:3.5px solid transparent;border-top:4px solid #d0d0d0;border-bottom:0"></div>
<svg class="a" style="left:238px;top:744px" width="15" height="12" viewBox="0 0 15 12"><path d="M14 6 H1.5 M6 1.5 L1.5 6 L6 10.5" fill="none" stroke="#5c5c5c" stroke-width="1.1"/></svg>
<svg class="a" style="left:261px;top:744px" width="15" height="12" viewBox="0 0 15 12"><path d="M1 6 H13.5 M9 1.5 L13.5 6 L9 10.5" fill="none" stroke="#5c5c5c" stroke-width="1.1"/></svg>
<div class="a ui" style="left:282px;top:742px;color:#6a6a6a">搜索深度:</div>
<div class="combo" style="left:339px;top:740px;width:40px;height:21px;background:#2d2d2d;border-color:#3d3d3d"></div>
<div class="a ui" style="left:343px;top:742px;color:#555">3</div>
<div class="a" style="left:368.8px;top:749.3px;border:3.5px solid transparent;border-top:4px solid #5c5c5c;border-bottom:0"></div>
<div class="a" style="left:7px;top:763px;width:640px;height:1px;background:#3d3d3d"></div>
<div class="a" style="left:7px;top:784px;width:640px;height:1px;background:#3d3d3d"></div>
<div class="a" style="left:14px;top:763px;width:1px;height:21px;background:#3d3d3d"></div>
<div class="a" style="left:328px;top:763px;width:1px;height:21px;background:#3d3d3d"></div>
<div class="a" style="left:328px;top:785px;width:1px;height:86px;background:#121212"></div>
<div class="a ui" style="left:20px;top:766px;color:#9a9a9a">名称</div>
<div class="a ui" style="left:333px;top:766px;color:#9a9a9a">值</div>
<div class="a" style="left:15px;top:801.3px;width:632px;height:1.2px;background:#121212"></div>
<svg class="a" style="left:20px;top:789px" width="6" height="9" viewBox="0 0 6 9"><path d="M1 0.8 L5 4.5 L1 8.2 Z" fill="none" stroke="#8a8a8a" stroke-width="1"/></svg>
<svg class="a" style="left:33px;top:786px" width="16" height="15" viewBox="0 0 16 15"><path d="M1.5 6.5 L10.5 1.5 L14.5 4.5 V9 L5.5 14 L1.5 11 Z M1.5 6.5 L5.5 9.5 L14.5 4.5 M5.5 9.5 V14" fill="#1d2a36" stroke="#3878ad" stroke-width="1.1" stroke-linejoin="round"/></svg>
<div class="a ui" style="left:53px;top:786px;color:#939393;letter-spacing:-0.15px">httpClient</div>
<div class="a ui" style="left:333px;top:786px;color:#939393;letter-spacing:-0.1px">{System.Net.Http.HttpClient}</div>
<div class="a" style="left:15px;top:818.3px;width:632px;height:1.2px;background:#121212"></div>
<svg class="a" style="left:20px;top:806px" width="6" height="9" viewBox="0 0 6 9"><path d="M1 0.8 L5 4.5 L1 8.2 Z" fill="none" stroke="#8a8a8a" stroke-width="1"/></svg>
<svg class="a" style="left:33px;top:803px" width="16" height="15" viewBox="0 0 16 15"><path d="M1.5 13.5 L8 7" stroke="#8e8e8e" stroke-width="2.2" stroke-linecap="round"/><path d="M13.8 3.2 L11.5 5.5 L9.8 3.8 L12 1.5 C9.5 0.6 7 3 8 5.8 C9 8.2 12.5 8 13.8 6 C14.4 5 14.3 4 13.8 3.2 Z" fill="#8e8e8e"/></svg>
<div class="a ui" style="left:53px;top:803px;color:#939393;letter-spacing:-0.15px">httpClient.BaseAddress</div>
<div class="a ui" style="left:333px;top:803px;color:#939393;letter-spacing:-0.1px">{https://localhost:44371/WebService1.asmx/GetAllUsers}</div>
<div class="a" style="left:15px;top:835.3px;width:632px;height:1.2px;background:#121212"></div>
<svg class="a" style="left:20px;top:823px" width="6" height="9" viewBox="0 0 6 9"><path d="M1 0.8 L5 4.5 L1 8.2 Z" fill="none" stroke="#8a8a8a" stroke-width="1"/></svg>
<svg class="a" style="left:33px;top:820px" width="16" height="15" viewBox="0 0 16 15"><path d="M1.5 6.5 L10.5 1.5 L14.5 4.5 V9 L5.5 14 L1.5 11 Z M1.5 6.5 L5.5 9.5 L14.5 4.5 M5.5 9.5 V14" fill="#1d2a36" stroke="#3878ad" stroke-width="1.1" stroke-linejoin="round"/></svg>
<div class="a ui" style="left:53px;top:820px;color:#939393;letter-spacing:-0.15px">response</div>
<div class="a ui" style="left:333px;top:820px;color:#939393;letter-spacing:-0.1px">null</div>
<div class="a" style="left:15px;top:852.3px;width:632px;height:1.2px;background:#121212"></div>
<svg class="a" style="left:20px;top:840px" width="6" height="9" viewBox="0 0 6 9"><path d="M1 0.8 L5 4.5 L1 8.2 Z" fill="none" stroke="#8a8a8a" stroke-width="1"/></svg>
<svg class="a" style="left:33px;top:837px" width="16" height="15" viewBox="0 0 16 15"><path d="M1.5 6.5 L10.5 1.5 L14.5 4.5 V9 L5.5 14 L1.5 11 Z M1.5 6.5 L5.5 9.5 L14.5 4.5 M5.5 9.5 V14" fill="#1d2a36" stroke="#3878ad" stroke-width="1.1" stroke-linejoin="round"/></svg>
<div class="a ui" style="left:53px;top:837px;color:#939393;letter-spacing:-0.15px">task</div>
<div class="a ui" style="left:333px;top:837px;color:#939393;letter-spacing:-0.1px">Id = 132, Status = WaitingForActivation, Method = &lt;&lt;Select&gt;&gt;</div>
<div class="a" style="left:15px;top:869.3px;width:632px;height:1.2px;background:#121212"></div>
<svg class="a" style="left:20px;top:857px" width="6" height="9" viewBox="0 0 6 9"><path d="M1 0.8 L5 4.5 L1 8.2 Z" fill="none" stroke="#8a8a8a" stroke-width="1"/></svg>
<svg class="a" style="left:33px;top:854px" width="16" height="15" viewBox="0 0 16 15"><path d="M1.5 6.5 L10.5 1.5 L14.5 4.5 V9 L5.5 14 L1.5 11 Z M1.5 6.5 L5.5 9.5 L14.5 4.5 M5.5 9.5 V14" fill="#1d2a36" stroke="#3878ad" stroke-width="1.1" stroke-linejoin="round"/></svg>
<div class="a ui" style="left:53px;top:854px;color:#939393;letter-spacing:-0.15px">this</div>
<div class="a ui" style="left:333px;top:854px;color:#939393;letter-spacing:-0.1px">{NewnetOe.Controllers.ThirdController}</div>
<div class="a" style="left:64px;top:1084px;width:583px;height:1px;background:#3d3d3d"></div>
<div class="a" style="left:6px;top:1084px;width:59px;height:22px;background:#1f1f1f;border:1px solid #3d3d3d;border-top:0"></div>
<div class="a ui" style="left:11px;top:1087px;color:#fff;font-weight:bold">自动窗口</div>
<div class="a ui" style="left:70px;top:1087px;color:#c0c0c0">局部变量</div>
<div class="a ui" style="left:131px;top:1087px;color:#c0c0c0">监视 1</div>
<div class="a" id="bw" style="left:626px;top:91px;width:760px;height:1019px;background:#f7f7f7;border-radius:7px 0 0 8px;overflow:hidden;box-shadow:0 2px 12px rgba(0,0,0,.5);color:#1b1b1b">
<div class="a" style="left:0px;top:0px;width:760px;height:39px;background:#cdcdcd"></div>
<svg class="a" style="left:13px;top:12px" width="15" height="15" viewBox="0 0 15 15"><rect x="1" y="1" width="13" height="12.5" rx="2.5" fill="none" stroke="#111" stroke-width="1.4"/><path d="M1 4.2 H14 V3 C14 1.8 13 1 12 1 H3 C2 1 1 1.8 1 3 Z" fill="#111"/><path d="M5.2 4 V13.5" stroke="#111" stroke-width="1.2"/></svg>
<div class="a" style="left:40px;top:3px;width:239px;height:36px;background:#f7f7f7;border-radius:8px 8px 0 0"></div>
<svg class="a" style="left:32px;top:31px" width="8" height="8" viewBox="0 0 8 8"><path d="M8 0 V8 H0 A8 8 0 0 0 8 0 Z" fill="#f7f7f7"/></svg>
<svg class="a" style="left:279px;top:31px" width="8" height="8" viewBox="0 0 8 8"><path d="M0 0 V8 H8 A8 8 0 0 1 0 0 Z" fill="#f7f7f7"/></svg>
<svg class="a" style="left:48px;top:11px" width="16" height="16" viewBox="0 0 16 16"><circle cx="8" cy="8" r="7.8" fill="#2c6e14"/><circle cx="8" cy="8" r="6.6" fill="#7fe02c"/><path d="M6.2 4 C4.4 4 5.6 7.5 3.6 8 C5.6 8.5 4.4 12 6.2 12 M9.8 4 C11.6 4 10.4 7.5 12.4 8 C10.4 8.5 11.6 12 9.8 12" fill="none" stroke="#1f5a2a" stroke-width="1.5"/><path d="M5.8 8 H10.2" stroke="#2f7a2a" stroke-width="1.6"/></svg>
<div class="a" style="left:72px;top:11.700000000000003px;font-size:12px;line-height:16px;color:#1b1b1b;letter-spacing:-0.35px">Swagger UI</div>
<svg class="a" style="left:259px;top:13px" width="12" height="12" viewBox="0 0 12 12"><path d="M2 2 L10 10 M10 2 L2 10" stroke="#1b1b1b" stroke-width="1.3"/></svg>
<svg class="a" style="left:292px;top:11px" width="16" height="16" viewBox="0 0 16 16"><path d="M8 1.5 V14.5 M1.5 8 H14.5" stroke="#1b1b1b" stroke-width="1.3"/></svg>
<svg class="a" style="left:11px;top:51px" width="18" height="16" viewBox="0 0 18 16"><path d="M16.5 8 H2 M8 2 L2 8 L8 14" fill="none" stroke="#b5b5b5" stroke-width="1.4"/></svg>
<svg class="a" style="left:48px;top:51px" width="17" height="17" viewBox="0 0 17 17"><path d="M14.2 8.5 A5.9 5.9 0 1 1 12.2 4" fill="none" stroke="#2a2a2a" stroke-width="1.4"/><path d="M12.8 0.8 V4.8 H8.8" fill="none" stroke="#2a2a2a" stroke-width="1.4"/></svg>
<div class="a" style="left:76px;top:43px;width:700px;height:32px;border-radius:16px;background:#fff;border:1px solid #d2d2d2"></div>
<svg class="a" style="left:85px;top:50px" width="15" height="17" viewBox="0 0 15 17"><rect x="2" y="6" width="11" height="9" rx="2" fill="none" stroke="#2a2a2a" stroke-width="1.3"/><path d="M4.8 6 V4.2 A2.7 2.7 0 0 1 10.2 4.2 V6" fill="none" stroke="#2a2a2a" stroke-width="1.3"/><circle cx="7.5" cy="10.5" r="1" fill="#2a2a2a"/></svg>
<div class="a" style="left:108px;top:50.5px;font-size:14px;line-height:18px;color:#1b1b1b;letter-spacing:0.11px"><span style="color:#444">https://</span>localhost:44366/swagger/index.html</div>
<svg class="a" style="left:11px;top:87px" width="18" height="14" viewBox="0 0 18 14"><rect x="1.2" y="2" width="13.5" height="8" rx="2.5" fill="none" stroke="#2a2a2a" stroke-width="1.3"/><path d="M4 12.3 H14 C16 12.3 17 11 17 9.5 V5" fill="none" stroke="#2a2a2a" stroke-width="1.2"/><path d="M4 6 H12" stroke="#2a2a2a" stroke-width="1.2"/></svg>
<div class="a" style="left:42px;top:87px;width:1px;height:17px;background:#d0d0d0"></div>
<svg class="a" style="left:55.5px;top:86.5px" width="17.6" height="15.4" viewBox="0 0 16 14"><path d="M1.5 3.5 C1.5 2.4 2.3 1.5 3.5 1.5 H6.5 L8 3.2 H12.5 C13.6 3.2 14.5 4 14.5 5.2 V10.5 C14.5 11.6 13.6 12.5 12.5 12.5 H3.5 C2.4 12.5 1.5 11.6 1.5 10.5 Z M1.5 5 H5.5 L7.8 3.2" fill="none" stroke="#2a2a2a" stroke-width="1.05"/></svg>
<div class="a" style="left:78px;top:86.5px;font-size:12px;line-height:16px;color:#1b1b1b;letter-spacing:0.1px">2018/12/5 的标签页</div>
<svg class="a" style="left:205.5px;top:86.5px" width="17.6" height="15.4" viewBox="0 0 16 14"><path d="M1.5 3.5 C1.5 2.4 2.3 1.5 3.5 1.5 H6.5 L8 3.2 H12.5 C13.6 3.2 14.5 4 14.5 5.2 V10.5 C14.5 11.6 13.6 12.5 12.5 12.5 H3.5 C2.4 12.5 1.5 11.6 1.5 10.5 Z M1.5 5 H5.5 L7.8 3.2" fill="none" stroke="#2a2a2a" stroke-width="1.05"/></svg>
<div class="a" style="left:228px;top:86.5px;font-size:12px;line-height:16px;color:#1b1b1b;letter-spacing:0.1px">2019/1/19 的标签...</div>
<svg class="a" style="left:358.5px;top:86.5px" width="17.6" height="15.4" viewBox="0 0 16 14"><path d="M1.5 3.5 C1.5 2.4 2.3 1.5 3.5 1.5 H6.5 L8 3.2 H12.5 C13.6 3.2 14.5 4 14.5 5.2 V10.5 C14.5 11.6 13.6 12.5 12.5 12.5 H3.5 C2.4 12.5 1.5 11.6 1.5 10.5 Z M1.5 5 H5.5 L7.8 3.2" fill="none" stroke="#2a2a2a" stroke-width="1.05"/></svg>
<div class="a" style="left:381px;top:86.5px;font-size:12px;line-height:16px;color:#1b1b1b;letter-spacing:0.1px">2019/2/25 的标签页</div>
<svg class="a" style="left:509.5px;top:86.5px" width="17.6" height="15.4" viewBox="0 0 16 14"><path d="M1.5 3.5 C1.5 2.4 2.3 1.5 3.5 1.5 H6.5 L8 3.2 H12.5 C13.6 3.2 14.5 4 14.5 5.2 V10.5 C14.5 11.6 13.6 12.5 12.5 12.5 H3.5 C2.4 12.5 1.5 11.6 1.5 10.5 Z M1.5 5 H5.5 L7.8 3.2" fill="none" stroke="#2a2a2a" stroke-width="1.05"/></svg>
<div class="a" style="left:532px;top:86.5px;font-size:12px;line-height:16px;color:#1b1b1b;letter-spacing:0.1px">2019/2/25 的标签...</div>
<svg class="a" style="left:663.5px;top:86.5px" width="17.6" height="15.4" viewBox="0 0 16 14"><path d="M1.5 3.5 C1.5 2.4 2.3 1.5 3.5 1.5 H6.5 L8 3.2 H12.5 C13.6 3.2 14.5 4 14.5 5.2 V10.5 C14.5 11.6 13.6 12.5 12.5 12.5 H3.5 C2.4 12.5 1.5 11.6 1.5 10.5 Z M1.5 5 H5.5 L7.8 3.2" fill="none" stroke="#2a2a2a" stroke-width="1.05"/></svg>
<div class="a" style="left:686px;top:86.5px;font-size:12px;line-height:16px;color:#1b1b1b;letter-spacing:0.1px">2019/2/26 的标签页</div>
<div class="a" style="left:3px;top:112px;width:760px;height:920px;background:#fafafa;border-radius:8px 0 0 0;box-shadow:0 0 2px rgba(0,0,0,.18)"></div>
<div class="a" style="left:24px;top:123px;width:760px;height:920px;background:#ebf3fb;border:1px solid #61affe;border-radius:4px 0 0 0"></div>
<div class="a" style="left:25px;top:166px;width:760px;height:1px;background:#61affe"></div>
<div class="a" style="left:30px;top:129px;width:80px;height:32px;background:#61affe;border-radius:3px;color:#fff;font-weight:bold;font-size:14px;line-height:32px;text-align:center;text-shadow:0 1px 0 rgba(0,0,0,.1)">GET</div>
<div class="a" style="left:120.5px;top:135px;font-size:15px;line-height:20px;color:#3b4151"><span class="mono">/api/Third/HttpGet_WebServices</span></div>
<div class="a" style="left:25px;top:167px;width:760px;height:49px;background:#fcfdfe;box-shadow:0 1px 2px rgba(0,0,0,.1)"></div>
<div class="a" style="left:45.5px;top:183px;font-size:14px;line-height:20px;font-weight:bold;color:#3b4151">Parameters</div>
<div class="a" style="left:37px;top:213px;width:94.5px;height:3.5px;background:#5aa6f5"></div>
<div class="a" style="left:45.5px;top:233px;font-size:14px;line-height:20px;color:#3b4151">No parameters</div>
<div class="a" style="left:55px;top:302px;width:665px;height:30px;background:#4990e2;border-radius:4px 0 0 4px;color:#fff;font-weight:bold;font-size:14px;line-height:32px;text-align:center">Execute</div>
<div class="a" style="left:720px;top:302px;width:60px;height:30px;border:2px solid #808080;background:#ebf3fb"></div>
<div class="a" style="left:25px;top:362px;width:760px;height:50px;background:#fcfdfe;box-shadow:0 1px 2px rgba(0,0,0,.1)"></div>
<div class="a" style="left:45.5px;top:378px;font-size:14px;line-height:20px;font-weight:bold;color:#3b4151">Responses</div>
<div class="a" style="left:45.5px;top:443.79999999999995px;font-size:12px;line-height:17px;font-weight:bold;color:#3b4151">Curl</div>
<div class="a" style="left:45px;top:464px;width:760px;height:72px;background:#333;border-radius:4px 0 0 4px"></div>
<div class="a" style="left:51.5px;top:470.0px;font-size:11px;line-height:14px;color:#fff"><span class="mono">curl -X <span class="g">'GET'</span> \</span></div>
<div class="a" style="left:51.5px;top:483.79999999999995px;font-size:11px;line-height:14px;color:#fff"><span class="mono">  <span class="g">'https://localhost:44366/api/Third/HttpGet_WebServices'</span> \</span></div>
<div class="a" style="left:51.5px;top:497.6px;font-size:11px;line-height:14px;color:#fff"><span class="mono">  -H <span class="g">'accept: text/plain'</span></span></div>
<div class="a" style="left:45.5px;top:547.8px;font-size:12px;line-height:17px;font-weight:bold;color:#3b4151">Request URL</div>
<div class="a" style="left:45px;top:568px;width:760px;height:33.5px;background:#333;border-radius:4px 0 0 4px"></div>
<div class="a" style="left:55px;top:578px;font-size:11.67px;line-height:14px;color:#fff"><span class="mono">https://localhost:44366/api/Third/HttpGet_WebServices</span></div>
<div class="a" style="left:45.5px;top:613.8px;font-size:12px;line-height:17px;font-weight:bold;color:#3b4151">Server response</div>
<div class="a" style="left:45.5px;top:647.5px;font-size:13.8px;line-height:20px;font-weight:bold;color:#3b4151">Code</div>
<div class="a" style="left:129px;top:649.6px;font-size:12px;line-height:17px;font-weight:bold;color:#3b4151">Details</div>
<div class="a" style="left:45px;top:677.5px;width:760px;height:1.5px;background:#a9b0ba"></div>
<div class="a" style="left:45.5px;top:690px;font-size:14px;line-height:20px;color:#3b4151">200</div>
<div class="a" style="left:129px;top:700.6px;font-size:12px;line-height:17px;font-weight:bold;color:#3b4151">Response body</div>
<div class="a" style="left:129px;top:721px;width:760px;height:320px;background:#333;border-radius:4px 0 0 0"></div>
<div class="a" style="left:135px;top:727px;font-size:11px;line-height:14px;color:#fff"><span class="mono">{</span></div>
<div class="a" style="left:135px;top:741px;font-size:11px;line-height:14px;color:#fff"><span class="mono">  "_value": <span class="r">0</span>,</span></div>
<div class="a" style="left:135px;top:755px;font-size:11px;line-height:14px;color:#fff"><span class="mono">  "_data": [</span></div>
<div class="a" style="left:135px;top:769px;font-size:11px;line-height:14px;color:#fff"><span class="mono">    {</span></div>
<div class="a" style="left:135px;top:783px;font-size:11px;line-height:14px;color:#fff"><span class="mono">      "UserID": <span class="r">10</span>,</span></div>
<div class="a" style="left:135px;top:797px;font-size:11px;line-height:14px;color:#fff"><span class="mono">      "UserName": <span class="g">"Eva"</span>,</span></div>
<div class="a" style="left:135px;top:811px;font-size:11px;line-height:14px;color:#fff"><span class="mono">      "UserEmail": <span class="g">"eva@test.com"</span>,</span></div>
<div class="a" style="left:135px;top:825px;font-size:11px;line-height:14px;color:#fff"><span class="mono">      "UserAge": <span class="r">27</span></span></div>
<div class="a" style="left:135px;top:839px;font-size:11px;line-height:14px;color:#fff"><span class="mono">    },</span></div>
<div class="a" style="left:135px;top:853px;font-size:11px;line-height:14px;color:#fff"><span class="mono">    {</span></div>
<div class="a" style="left:135px;top:867px;font-size:11px;line-height:14px;color:#fff"><span class="mono">      "UserID": <span class="r">9</span>,</span></div>
<div class="a" style="left:135px;top:881px;font-size:11px;line-height:14px;color:#fff"><span class="mono">      "UserName": <span class="g">"David"</span>,</span></div>
<div class="a" style="left:135px;top:895px;font-size:11px;line-height:14px;color:#fff"><span class="mono">      "UserEmail": <span class="g">"david@test.com"</span>,</span></div>
<div class="a" style="left:135px;top:909px;font-size:11px;line-height:14px;color:#fff"><span class="mono">      "UserAge": <span class="r">33</span></span></div>
<div class="a" style="left:135px;top:923px;font-size:11px;line-height:14px;color:#fff"><span class="mono">    },</span></div>
<div class="a" style="left:135px;top:937px;font-size:11px;line-height:14px;color:#fff"><span class="mono">    {</span></div>
<div class="a" style="left:135px;top:951px;font-size:11px;line-height:14px;color:#fff"><span class="mono">      "UserID": <span class="r">8</span>,</span></div>
<div class="a" style="left:135px;top:965px;font-size:11px;line-height:14px;color:#fff"><span class="mono">      "UserName": <span class="g">"Charlie"</span>,</span></div>
<div class="a" style="left:135px;top:979px;font-size:11px;line-height:14px;color:#fff"><span class="mono">      "UserEmail": <span class="g">"charlie@test.com"</span>,</span></div>
<div class="a" style="left:135px;top:993px;font-size:11px;line-height:14px;color:#fff"><span class="mono">      "UserAge": <span class="r">19</span></span></div>
<div class="a" style="left:135px;top:1007px;font-size:11px;line-height:14px;color:#fff"><span class="mono">    },</span></div>
</div>
</body></html>
